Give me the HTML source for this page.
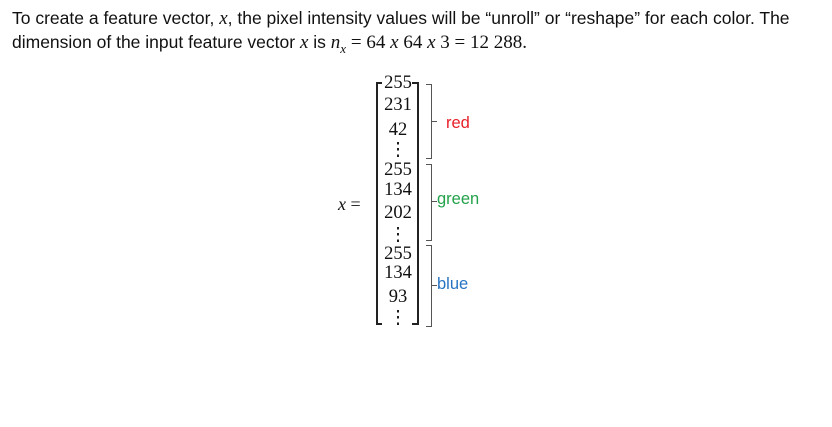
<!DOCTYPE html>
<html><head><style>
body{margin:0;width:832px;height:427px;background:#fff;position:relative;overflow:hidden;font-family:"Liberation Sans",sans-serif;color:#111}
.t{position:absolute;left:12px;font-size:17.5px;white-space:nowrap}
.m{font-family:"Liberation Serif",serif;font-style:italic;font-size:19px}
.n{position:absolute;font-family:"Liberation Serif",serif;font-size:18.5px;width:40px;text-align:center;left:378px;line-height:20px}
.l{position:absolute;font-size:16.5px}
.ln{position:absolute;background:#222}
</style></head><body>
<div class="t" style="top:8px">To create a feature vector, <span class="m">x</span>, the pixel intensity values will be “unroll” or “reshape” for each color. The</div>
<div class="t" style="top:32px">dimension of the input feature vector <span class="m">x</span> is <span class="m">n<sub style="font-size:13px">x</sub></span> <span style="font-family:'Liberation Serif',serif;font-size:19px">= 64 <i>x</i> 64 <i>x</i> 3 = 12 288.</span></div>

<div style="position:absolute;left:338px;top:194px;font-family:'Liberation Serif',serif;font-size:18px"><i>x</i> =</div>

<div class="ln" style="left:376px;top:82px;width:2px;height:243px"></div>
<div class="ln" style="left:376px;top:82px;width:6px;height:2px"></div>
<div class="ln" style="left:376px;top:323px;width:6px;height:2px"></div>
<div class="ln" style="left:417px;top:82px;width:2px;height:243px"></div>
<div class="ln" style="left:412px;top:82px;width:6px;height:2px"></div>
<div class="ln" style="left:412px;top:323px;width:6px;height:2px"></div>

<div class="n" style="top:73px">255</div>
<div class="n" style="top:95px">231</div>
<div class="n" style="top:120px">42</div>
<div class="n" style="top:140px">⋮</div>
<div class="n" style="top:160px">255</div>
<div class="n" style="top:180px">134</div>
<div class="n" style="top:203px">202</div>
<div class="n" style="top:225px">⋮</div>
<div class="n" style="top:244px">255</div>
<div class="n" style="top:263px">134</div>
<div class="n" style="top:287px">93</div>
<div class="n" style="top:308px">⋮</div>

<div style="position:absolute;left:426px;top:84px;width:5px;height:73px;border:1px solid #555;border-left:none"></div>
<div class="ln" style="left:432px;top:121px;width:5px;height:1px;background:#555"></div>
<div style="position:absolute;left:426px;top:164px;width:5px;height:75px;border:1px solid #555;border-left:none"></div>
<div class="ln" style="left:432px;top:201px;width:5px;height:1px;background:#555"></div>
<div style="position:absolute;left:426px;top:245px;width:5px;height:80px;border:1px solid #555;border-left:none"></div>
<div class="ln" style="left:432px;top:285px;width:5px;height:1px;background:#555"></div>

<div class="l" style="left:446px;top:114px;color:#e8202a">red</div>
<div class="l" style="left:437px;top:190px;color:#22a24a">green</div>
<div class="l" style="left:437px;top:275px;color:#2673c2">blue</div>
</body></html>
